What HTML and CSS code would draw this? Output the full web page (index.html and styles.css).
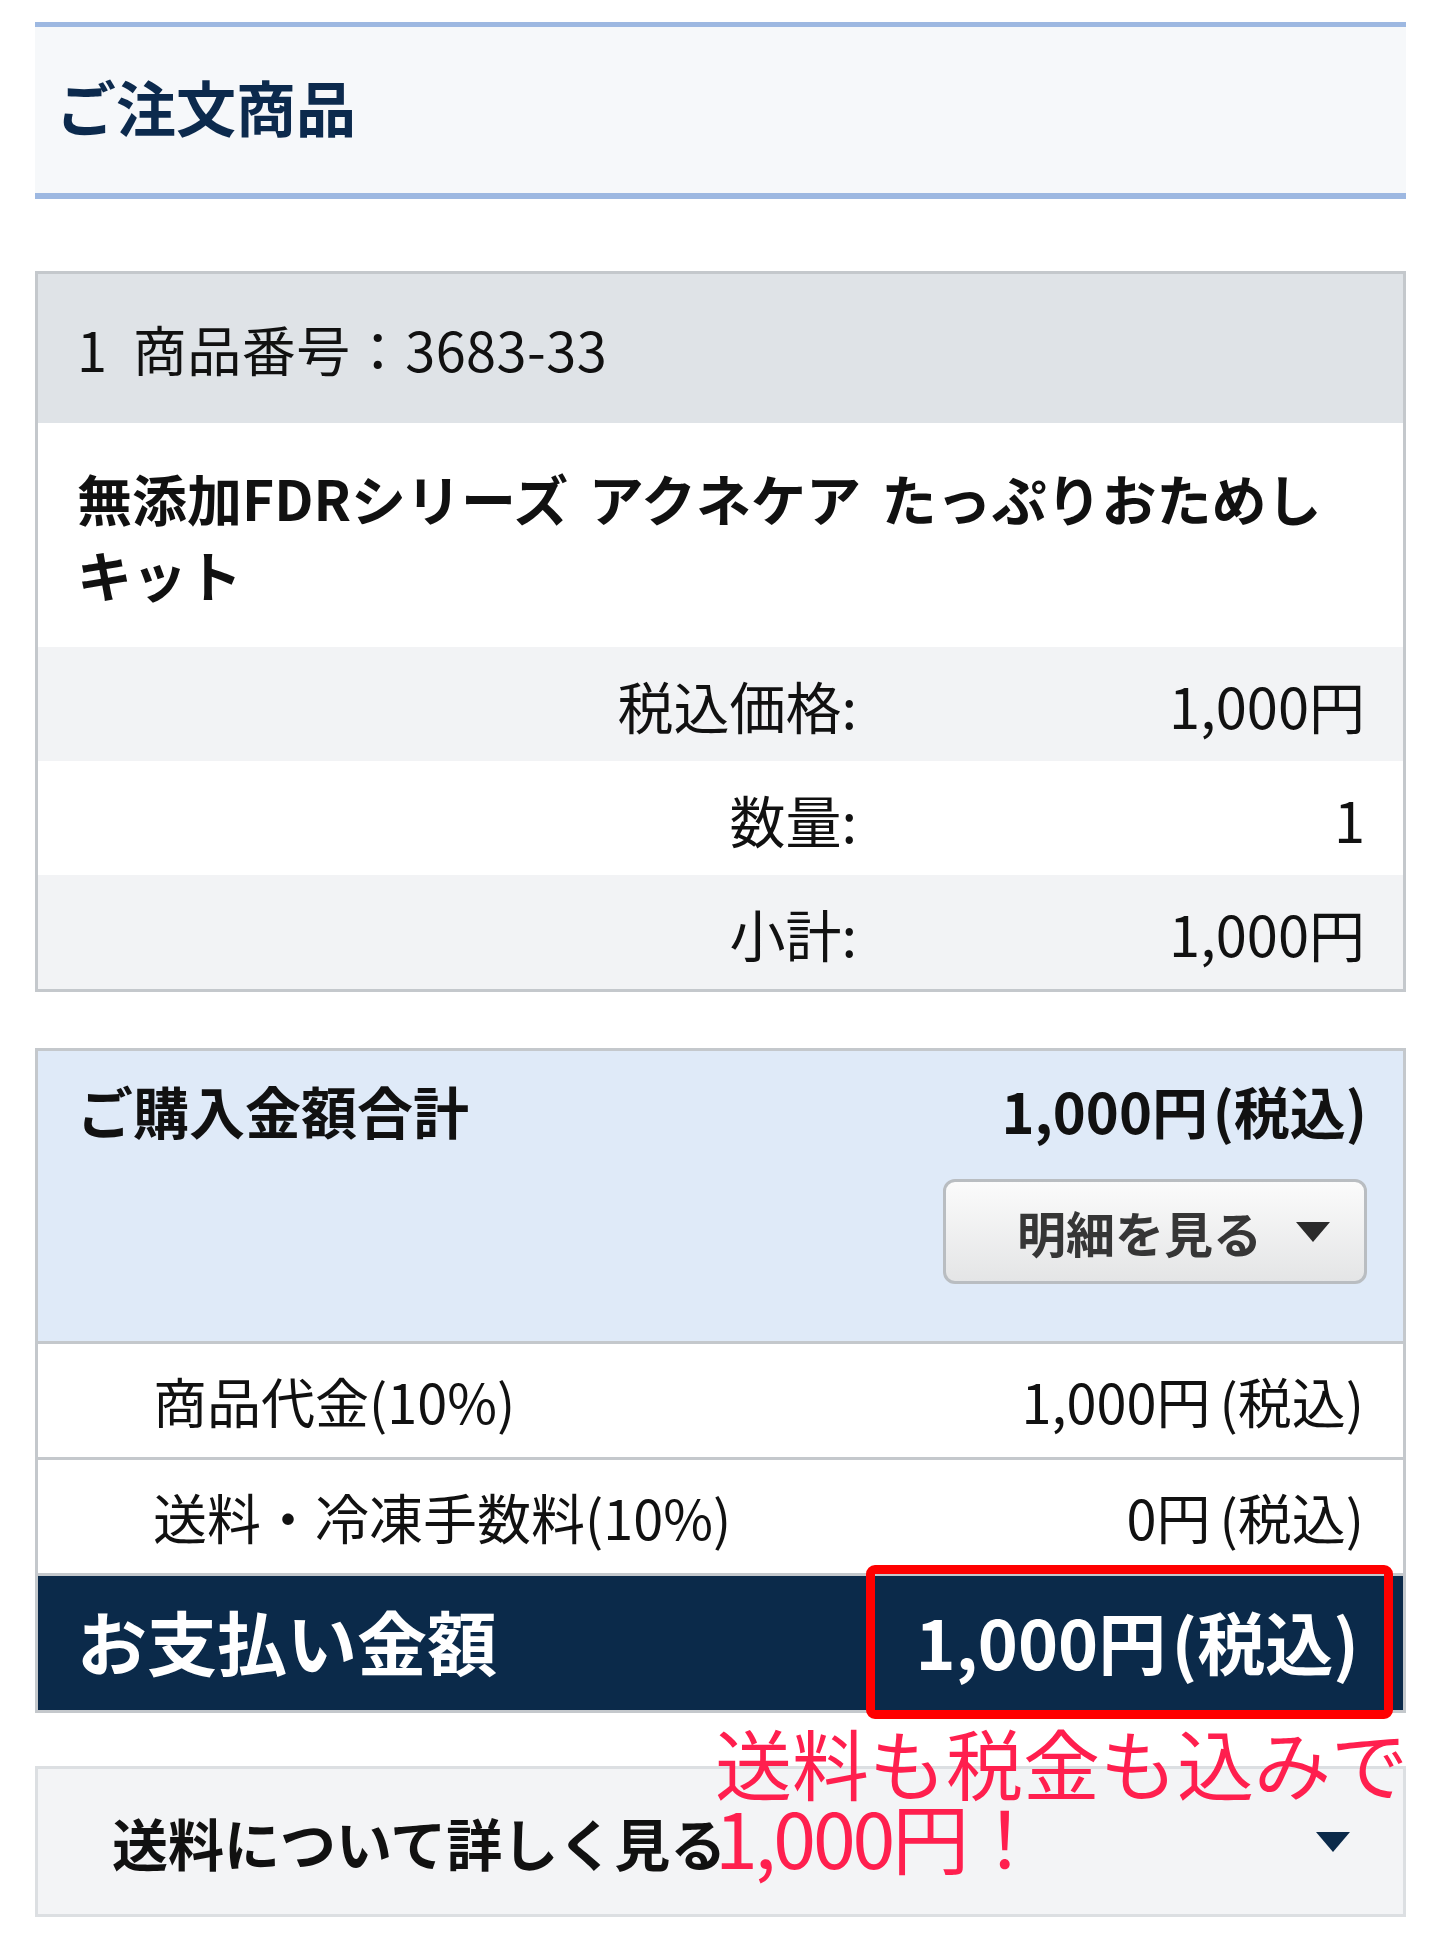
FILE: index.html
```html
<!DOCTYPE html>
<html lang="ja">
<head>
<meta charset="utf-8">
<title>ご注文商品</title>
<link rel="stylesheet" href="styles.css">
</head>
<body>
<div class="page">
  <div class="title-bar"><h1 class="title">ご注文商品</h1></div>

  <section class="item-box">
    <div class="item-head">1&nbsp; 商品番号：3683-33</div>
    <div class="item-name">無添加FDRシリーズ アクネケア たっぷりおためしキット</div>
    <div class="item-row alt"><span class="lbl">税込価格:</span><span class="val">1,000円</span></div>
    <div class="item-row"><span class="lbl">数量:</span><span class="val">1</span></div>
    <div class="item-row alt"><span class="lbl">小計:</span><span class="val">1,000円</span></div>
  </section>

  <section class="total-box">
    <div class="total-top">
      <div class="total-line"><span class="total-lbl">ご購入金額合計</span><span class="total-val">1,000円 (税込)</span></div>
      <div class="btn-wrap">
        <button class="detail-btn">明細を見る<svg class="tri" viewBox="0 0 34 20" width="34" height="20"><path d="M0 0H34L17 20Z" fill="#2b2b2b"/></svg></button>
      </div>
    </div>
    <div class="sub-row"><span>商品代金(10%)</span><span class="sub-val">1,000円 (税込)</span></div>
    <div class="sub-row"><span>送料・冷凍手数料(10%)</span><span class="sub-val">0円 (税込)</span></div>
    <div class="pay-row"><span class="pay-lbl">お支払い金額</span><span class="pay-val">1,000円 (税込)</span></div>
    <div class="red-frame"></div>
  </section>

  <section class="ship-box">
    <span class="ship-text">送料について詳しく見る</span>
    <svg class="ship-tri" viewBox="0 0 34 20" width="34" height="20"><path d="M0 0H34L17 20Z" fill="#0b2a4a"/></svg>
    <div class="note"><div class="note-l1">送料も税金も込みで</div><div class="note-l2">1,000円！</div></div>
  </section>
</div>
</body>
</html>
```

FILE: styles.css
```css
* { box-sizing: border-box; }
html, body { margin: 0; padding: 0; background: #fff; }
body {
  font-family: "Noto Sans CJK JP", "Noto Sans", sans-serif;
  color: #111;
}
.page { padding: 22px 34px 0 35px; position: relative; }

.title-bar {
  background: #f6f8fa;
  border-top: 5px solid #9db8e1;
  border-bottom: 6px solid #9db8e1;
  height: 177px;
  display: flex;
  align-items: center;
  padding: 0 0 10px 21px;
}
.title {
  margin: 0;
  font-size: 60px;
  font-weight: 700;
  color: #0c2a4d;
}

.item-box {
  margin-top: 72px;
  border: 3px solid #c4c8cc;
}
.item-head {
  background: #dfe3e7;
  height: 149px;
  display: flex;
  align-items: center;
  padding-left: 39px;
  font-size: 54px;
  letter-spacing: 0.5px;
}
.item-name {
  background: #fff;
  padding: 36px 50px 36px 39px;
  font-size: 55px;
  font-weight: 700;
  line-height: 76px;
  word-spacing: 8px;
}
.item-row {
  display: grid;
  grid-template-columns: 1fr 546px;
  height: 114px;
  align-items: center;
  font-size: 56px;
  background: #fff;
}
.item-row.alt { background: #f2f3f5; }
.lbl { text-align: right; }
.val { text-align: right; padding-right: 38px; }

.total-box {
  margin-top: 56px;
  border: 3px solid #c4c8cc;
  position: relative;
}
.total-top {
  background: #dfeaf8;
  height: 293px;
  border-bottom: 3px solid #c4c8cc;
  padding: 24px 36px 0 39px;
}
.total-line {
  display: flex;
  justify-content: space-between;
  align-items: center;
  font-size: 56px;
  font-weight: 700;
  height: 68px;
}
.total-val { word-spacing: -8px; }
.btn-wrap { display: flex; justify-content: flex-end; margin-top: 36px; }
.detail-btn {
  width: 424px;
  height: 105px;
  border: 3px solid #b9bdc1;
  border-radius: 12px;
  background: linear-gradient(#fbfbfb, #e4e5e6);
  font-family: inherit;
  font-size: 49px;
  font-weight: 700;
  color: #363636;
  display: flex;
  align-items: center;
  justify-content: flex-end;
  gap: 34px;
  padding: 0 34px 0 0;
}
.sub-row {
  display: flex;
  justify-content: space-between;
  align-items: center;
  height: 116px;
  padding: 0 39px 0 115px;
  font-size: 54px;
  background: #fff;
  border-bottom: 3px solid #c4c8cc;
}
.sub-val { word-spacing: -3px; }
.pay-row {
  background: #0b2a4a;
  color: #fff;
  height: 134px;
  display: flex;
  justify-content: space-between;
  align-items: center;
  padding: 0 44px 6px 39px;
  font-weight: 700;
}
.pay-lbl { font-size: 70px; }
.pay-val { font-size: 68px; word-spacing: -10px; }
.red-frame {
  position: absolute;
  left: 828px;
  bottom: -9px;
  width: 527px;
  height: 154px;
  border: 9px solid #ff0000;
  border-radius: 9px;
}

.ship-box {
  margin-top: 53px;
  margin-bottom: 32px;
  height: 151px;
  border: 3px solid #dcdfe2;
  background: #f3f4f6;
  display: flex;
  align-items: center;
  justify-content: space-between;
  padding: 0 53px 0 74px;
  position: relative;
}
.ship-text { font-size: 56px; font-weight: 700; }
.note {
  position: absolute;
  left: 677px;
  top: -44px;
  color: #ff1f4e;
  font-size: 77px;
  line-height: 74px;
  white-space: nowrap;
}
.note-l2 { letter-spacing: -3px; }
```
